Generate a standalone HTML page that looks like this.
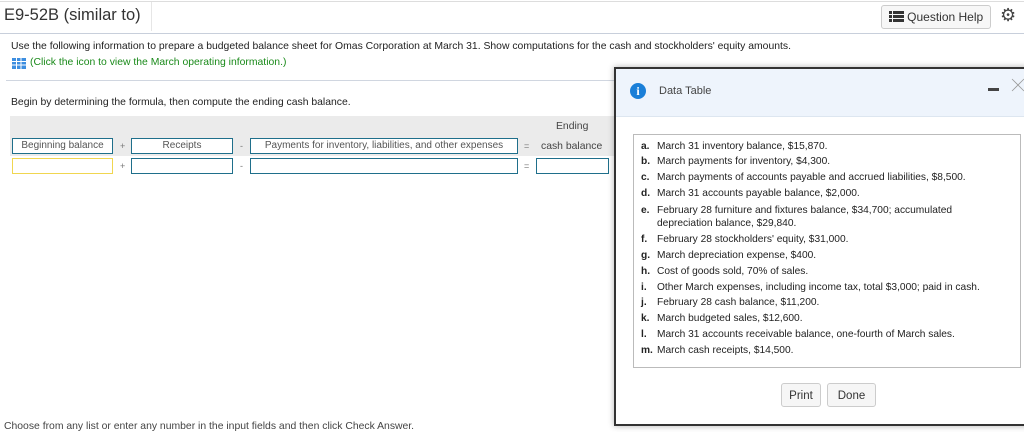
<!DOCTYPE html>
<html><head><meta charset="utf-8"><style>
body{margin:0;width:1024px;height:426px;overflow:hidden;background:#fff;font-family:"Liberation Sans",sans-serif;position:relative;color:#222}
.a{position:absolute;white-space:nowrap}
.f{font-size:10.4px}
.box{position:absolute;border:1px solid #1f6f8b;background:#fff;font-size:10px;color:#555;text-align:center;line-height:14px;box-sizing:border-box;height:16px}
.op{position:absolute;font-size:9px;color:#777}
.li{position:absolute;left:641px;font-size:10.2px;line-height:13px;color:#222;white-space:nowrap}
.li b{display:inline-block;width:16px}
.btn{position:absolute;border:1px solid #ccc;border-radius:3px;background:#f6f6f6;font-size:11.5px;color:#333;text-align:center;line-height:24px;height:24px;box-sizing:border-box}
</style></head><body>
<div class="a" style="left:0;top:1px;width:1024px;height:31px;border-top:1px solid #ddd;border-bottom:1px solid #c8cfdb"></div>
<div class="a" style="left:151px;top:2px;height:29px;border-left:1px solid #e6e6e6"></div>
<div class="a" style="left:4px;top:6px;font-size:16.5px;color:#333">E9-52B (similar to)</div>
<div class="btn" style="left:881px;top:5px;width:110px;height:24px;background:#f7f7f7;font-size:12px;color:#333;line-height:22px">
<svg width="15" height="11" style="vertical-align:-1px" viewBox="0 0 15 11"><g fill="#333"><rect x="0" y="0" width="3" height="3"/><rect x="4" y="0" width="11" height="3"/><rect x="0" y="4" width="3" height="3"/><rect x="4" y="4" width="11" height="3"/><rect x="0" y="8" width="3" height="3"/><rect x="4" y="8" width="11" height="3"/></g></svg> Question Help</div>
<div class="a" style="left:1000px;top:5px;font-size:18px;color:#444">⚙</div>
<div class="a f" style="left:11px;top:41px">Use the following information to prepare a budgeted balance sheet for Omas Corporation at March 31. Show computations for the cash and stockholders' equity amounts.</div>
<svg class="a" style="left:12px;top:58px" width="14" height="11" viewBox="0 0 14 11"><rect width="14" height="11" fill="#3d8ee0"/><g stroke="#fff" stroke-width="1"><line x1="0" y1="3.5" x2="14" y2="3.5"/><line x1="0" y1="7" x2="14" y2="7"/><line x1="4.5" y1="0" x2="4.5" y2="11"/><line x1="9" y1="0" x2="9" y2="11"/></g></svg>
<div class="a f" style="left:30px;top:57px;color:#1a8a1a">(Click the icon to view the March operating information.)</div>
<div class="a" style="left:6px;top:80px;width:610px;border-top:1px solid #d0d6e0"></div>
<div class="a f" style="left:11px;top:97px">Begin by determining the formula, then compute the ending cash balance.</div>
<div class="a" style="left:10px;top:116px;width:604px;height:40px;background:#ebebeb"></div>
<div class="a f" style="left:556px;top:121px;color:#444">Ending</div>
<div class="a f" style="left:541px;top:141px;color:#444">cash balance</div>
<div class="box" style="left:12px;top:138px;width:101px">Beginning balance</div>
<div class="op" style="left:120px;top:141px">+</div>
<div class="box" style="left:131px;top:138px;width:102px">Receipts</div>
<div class="op" style="left:240px;top:141px">-</div>
<div class="box" style="left:250px;top:138px;width:268px">Payments for inventory, liabilities, and other expenses</div>
<div class="op" style="left:524px;top:141px">=</div>
<div class="box" style="left:12px;top:158px;width:101px;border-color:#f0d650"></div>
<div class="op" style="left:120px;top:161px">+</div>
<div class="box" style="left:131px;top:158px;width:102px"></div>
<div class="op" style="left:240px;top:161px">-</div>
<div class="box" style="left:250px;top:158px;width:268px"></div>
<div class="op" style="left:524px;top:161px">=</div>
<div class="box" style="left:536px;top:158px;width:73px"></div>
<div class="a f" style="left:4px;top:421px;color:#444">Choose from any list or enter any number in the input fields and then click Check Answer.</div>
<!-- dialog -->
<div class="a" style="left:614px;top:67px;width:420px;height:355px;border:2px solid #333;background:#fff;box-shadow:0 0 6px rgba(0,0,0,.3)"></div>
<div class="a" style="left:616px;top:69px;width:410px;height:47px;background:#eef4fc;border-bottom:1px solid #dde6f0"></div>
<div class="a" style="left:630px;top:83px;width:16px;height:16px;border-radius:50%;background:#1a7fd8;color:#fff;font:bold 12px 'Liberation Serif',serif;text-align:center;line-height:16px">i</div>
<div class="a" style="left:659px;top:85px;font-size:11px;color:#444">Data Table</div>
<div class="a" style="left:988px;top:88px;width:11px;height:3px;background:#444"></div>
<svg class="a" style="left:1011px;top:78px" width="14" height="14"><path d="M1 13L13 1M1 1L13 13" stroke="#999" stroke-width="0.8"/></svg>
<div class="a" style="left:633px;top:134px;width:386px;height:232px;border:1px solid #bbb"></div>
<div class="li" style="top:140px"><b>a.</b>March 31 inventory balance, $15,870.</div>
<div class="li" style="top:155px"><b>b.</b>March payments for inventory, $4,300.</div>
<div class="li" style="top:171px"><b>c.</b>March payments of accounts payable and accrued liabilities, $8,500.</div>
<div class="li" style="top:187px"><b>d.</b>March 31 accounts payable balance, $2,000.</div>
<div class="li" style="top:204px"><b>e.</b>February 28 furniture and fixtures balance, $34,700; accumulated<br><span style="padding-left:16px">depreciation balance, $29,840.</span></div>
<div class="li" style="top:233px"><b>f.</b>February 28 stockholders' equity, $31,000.</div>
<div class="li" style="top:249px"><b>g.</b>March depreciation expense, $400.</div>
<div class="li" style="top:265px"><b>h.</b>Cost of goods sold, 70% of sales.</div>
<div class="li" style="top:281px"><b>i.</b>Other March expenses, including income tax, total $3,000; paid in cash.</div>
<div class="li" style="top:296px"><b>j.</b>February 28 cash balance, $11,200.</div>
<div class="li" style="top:312px"><b>k.</b>March budgeted sales, $12,600.</div>
<div class="li" style="top:328px"><b>l.</b>March 31 accounts receivable balance, one-fourth of March sales.</div>
<div class="li" style="top:344px"><b>m.</b>March cash receipts, $14,500.</div>
<div class="btn" style="left:781px;top:383px;width:40px">Print</div>
<div class="btn" style="left:827px;top:383px;width:49px">Done</div>
</body></html>
